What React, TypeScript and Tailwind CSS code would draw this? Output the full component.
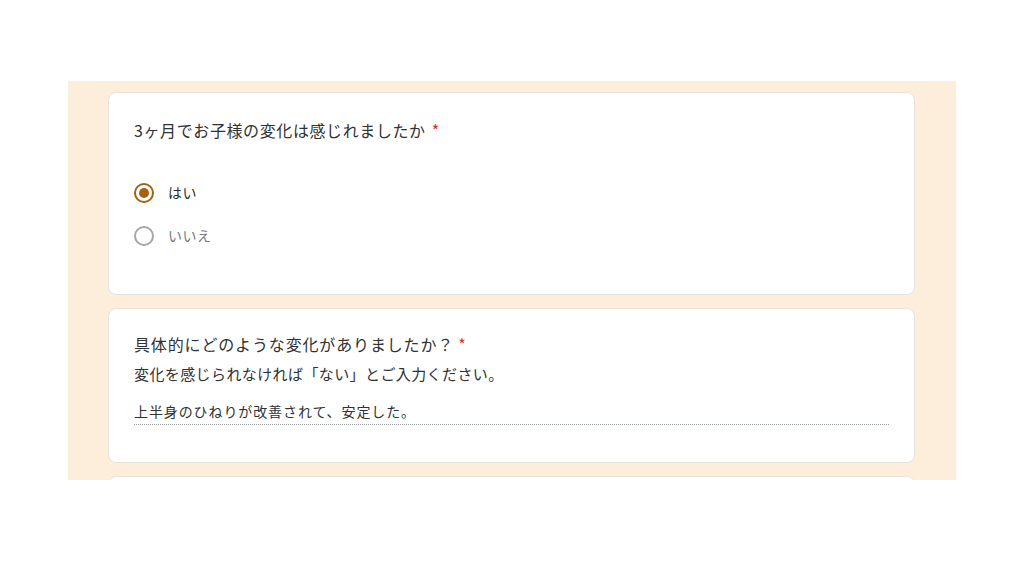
import React from "react";

const font = { fontFamily: '"Noto Sans CJK JP", "Noto Sans", sans-serif' };

function Radio({ checked, label }: { checked: boolean; label: string }) {
  return (
    <div className="flex items-center h-[43px]">
      <div
        className={
          checked
            ? "w-[20px] h-[20px] rounded-full border-2 border-[#a8600f] flex items-center justify-center"
            : "w-[20px] h-[20px] rounded-full border-2 border-[#a4a8ad] flex items-center justify-center"
        }
      >
        {checked && <div className="w-[10px] h-[10px] rounded-full bg-[#a8600f]" />}
      </div>
      <span
        className={
          checked
            ? "ml-[14px] text-[14px] text-[#2a2b2e] tracking-[0.5px]"
            : "ml-[14px] text-[14px] text-[#75797e] tracking-[0.5px]"
        }
      >
        {label}
      </span>
    </div>
  );
}

export default function App() {
  return (
    <div className="w-[1024px] h-[576px] bg-white pt-[81px] pl-[68px]" style={font}>
      <div className="w-[888px] h-[399px] bg-[#fdeedb] overflow-hidden pt-[11px] pl-[40px] flex flex-col gap-[13px]">
        <div className="w-[807px] h-[203px] shrink-0 bg-white rounded-[8px] border border-[#e6e3df] pl-[25px] pt-[25px]">
          <div className="text-[16px] leading-[24px] text-[#303134] tracking-[0.6px]">
            3ヶ月でお子様の変化は感じれましたか<span className="text-[#d93025] ml-[6px]">*</span>
          </div>
          <div className="mt-[29px] flex flex-col">
            <Radio checked label="はい" />
            <Radio checked={false} label="いいえ" />
          </div>
        </div>
        <div className="w-[807px] h-[155px] shrink-0 bg-white rounded-[8px] border border-[#e6e3df] pl-[25px] pr-[25px] pt-[23px]">
          <div className="text-[16px] leading-[24px] text-[#303134] tracking-[0.85px]">
            具体的にどのような変化がありましたか？<span className="text-[#d93025] ml-[4px]">*</span>
          </div>
          <div className="text-[15px] leading-[24px] mt-[6px] text-[#303134] tracking-[0.4px]">
            変化を感じられなければ「ない」とご入力ください。
          </div>
          <div className="mt-[14px] text-[14px] leading-[22px] text-[#303134] pb-[2px] border-b border-dotted border-[#9aa0a6] w-[755px] tracking-[0.9px]">
            上半身のひねりが改善されて、安定した。
          </div>
        </div>
        <div className="w-[807px] h-[100px] shrink-0 bg-white rounded-[8px] border border-[#e6e3df]" />
      </div>
    </div>
  );
}
